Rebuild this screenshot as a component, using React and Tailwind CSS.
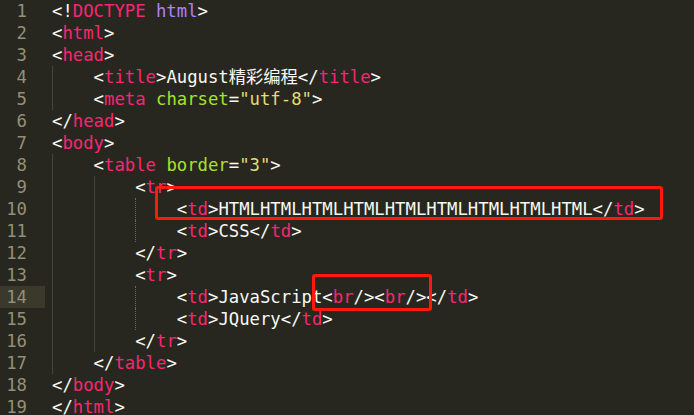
const C = {
  tag: 'text-[#f92672]',
  pun: 'text-[#f8f8f2]',
  txt: 'text-[#f8f8f2]',
  attr: 'text-[#a6e22e]',
  str: 'text-[#e6db74]',
  kw: 'text-[#ae81ff]',
};

// each line: [indent, [[color, text], ...]]
const lines = [
  [0, [['pun', '<!'], ['tag', 'DOCTYPE'], ['txt', ' '], ['kw', 'html'], ['pun', '>']]],
  [0, [['pun', '<'], ['tag', 'html'], ['pun', '>']]],
  [0, [['pun', '<'], ['tag', 'head'], ['pun', '>']]],
  [1, [['pun', '<'], ['tag', 'title'], ['pun', '>'], ['txt', 'August精彩编程'], ['pun', '</'], ['tag', 'title'], ['pun', '>']]],
  [1, [['pun', '<'], ['tag', 'meta'], ['txt', ' '], ['attr', 'charset'], ['pun', '='], ['str', '"utf-8"'], ['pun', '>']]],
  [0, [['pun', '</'], ['tag', 'head'], ['pun', '>']]],
  [0, [['pun', '<'], ['tag', 'body'], ['pun', '>']]],
  [1, [['pun', '<'], ['tag', 'table'], ['txt', ' '], ['attr', 'border'], ['pun', '='], ['str', '"3"'], ['pun', '>']]],
  [2, [['pun', '<'], ['tag', 'tr'], ['pun', '>']]],
  [3, [['pun', '<'], ['tag', 'td'], ['pun', '>'], ['txt', 'HTMLHTMLHTMLHTMLHTMLHTMLHTMLHTMLHTML'], ['pun', '</'], ['tag', 'td'], ['pun', '>']]],
  [3, [['pun', '<'], ['tag', 'td'], ['pun', '>'], ['txt', 'CSS'], ['pun', '</'], ['tag', 'td'], ['pun', '>']]],
  [2, [['pun', '</'], ['tag', 'tr'], ['pun', '>']]],
  [2, [['pun', '<'], ['tag', 'tr'], ['pun', '>']]],
  [3, [['pun', '<'], ['tag', 'td'], ['pun', '>'], ['txt', 'JavaScript'], ['pun', '<'], ['tag', 'br'], ['pun', '/><'], ['tag', 'br'], ['pun', '/></'], ['tag', 'td'], ['pun', '>']]],
  [3, [['pun', '<'], ['tag', 'td'], ['pun', '>'], ['txt', 'JQuery'], ['pun', '</'], ['tag', 'td'], ['pun', '>']]],
  [2, [['pun', '</'], ['tag', 'tr'], ['pun', '>']]],
  [1, [['pun', '</'], ['tag', 'table'], ['pun', '>']]],
  [0, [['pun', '</'], ['tag', 'body'], ['pun', '>']]],
  [0, [['pun', '</'], ['tag', 'html'], ['pun', '>']]],
];

const Guide = ({ dotted }) => (
  <span
    className={`inline-block w-[41.6px] h-[22px] align-top border-l ${
      dotted ? 'border-dotted border-[#6b6a58]' : 'border-[#45443a]'
    }`}
  />
);

const App = () => {
  return (
    <div
      className="relative w-[694px] h-[415px] overflow-hidden bg-[#272720] text-[17.28px] leading-[22px] font-['DejaVu_Sans_Mono','Noto_Sans_CJK_SC',monospace]"
    >
      <div className="flex">
        {/* gutter */}
        <div className="w-[52px] shrink-0">
          {lines.map((_, i) => (
            <div
              key={i}
              className={`h-[22px] w-[45px] pr-[18px] text-right text-[#929079] ${
                i === 13 ? 'bg-[#3b392c]' : ''
              }`}
            >
              {i + 1}
            </div>
          ))}
        </div>

        {/* code */}
        <div className="whitespace-pre">
          {lines.map(([indent, toks], i) => (
            <div key={i} className="h-[22px] flex">
              {Array.from({ length: indent }).map((_, k) => (
                <Guide key={k} dotted={k === 2} />
              ))}
              <span>
                {toks.map(([c, t], j) => (
                  <span key={j} className={C[c]}>
                    {t}
                  </span>
                ))}
              </span>
            </div>
          ))}
        </div>
      </div>

      {/* highlight boxes */}
      <div className="absolute left-[155px] top-[186px] w-[508px] h-[34px] border-[3px] border-[#ff1a0d] rounded-[3px]" />
      <div className="absolute left-[312px] top-[274px] w-[120px] h-[37px] border-[3px] border-[#ff1a0d] rounded-[3px]" />
    </div>
  );
};

export default App;
